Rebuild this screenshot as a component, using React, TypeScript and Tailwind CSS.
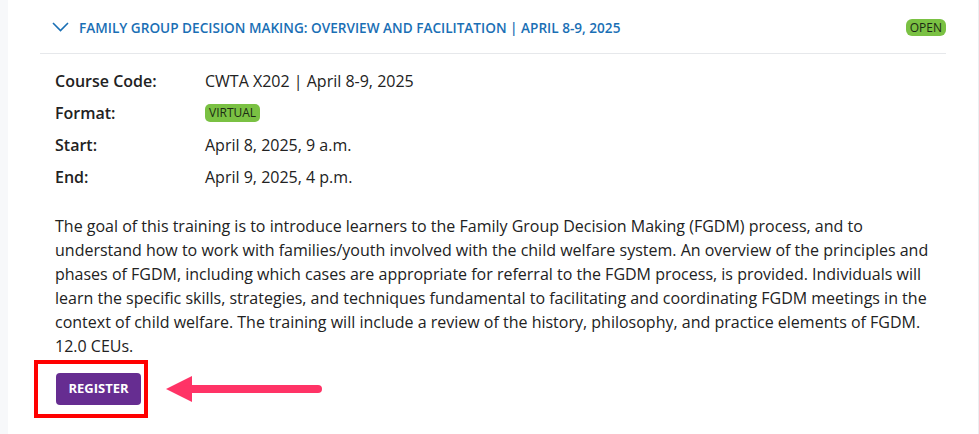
const details = [
  { label: "Course Code:", value: "CWTA X202 | April 8-9, 2025" },
  { label: "Format:", badge: "VIRTUAL" },
  { label: "Start:", value: "April 8, 2025, 9 a.m." },
  { label: "End:", value: "April 9, 2025, 4 p.m." },
];

export default function App() {
  return (
    <div className="flex h-[434px] w-[979px] bg-[#f7f8fa] font-['Open_Sans',sans-serif] text-[#222]">
      <div className="ml-[8px] flex-1 border-r border-[#eceef1] bg-white">
        <div className="ml-[32px] mr-[32px] flex h-[54px] items-center border-b border-[#e6e8eb] pl-[12px] pt-[4px]">
          <svg width="17" height="10" viewBox="0 0 17 10" className="mt-[-4px] shrink-0">
            <path d="M1 1 L8.5 8.5 L16 1" fill="none" stroke="#1a6fb5" strokeWidth="1.6" />
          </svg>
          <h2 className="ml-[10px] flex-1 text-[13.6px] font-semibold text-[#1a6fb5]">
            FAMILY GROUP DECISION MAKING: OVERVIEW AND FACILITATION | APRIL 8-9, 2025
          </h2>
          <span className="mt-[-2px] rounded-[6px] bg-[#7ac143] px-[4px] py-[1px] text-[12px] leading-[15px] text-[#1c2a14]">OPEN</span>
        </div>

        <div className="pl-[47px] pt-[11px]">
          {details.map((row) => (
            <div key={row.label} className="flex h-[32px] items-center text-[16px]">
              <span className="w-[150px] font-semibold">{row.label}</span>
              {row.badge ? (
                <span className="rounded-[5px] bg-[#7ac143] px-[4px] py-[1px] text-[12px] leading-[16px] text-[#1c2a14]">{row.badge}</span>
              ) : (
                <span>{row.value}</span>
              )}
            </div>
          ))}

          <p className="mt-[21px] w-[880px] text-[16px] leading-[24px]">
            The goal of this training is to introduce learners to the Family Group Decision Making (FGDM) process, and to
            understand how to work with families/youth involved with the child welfare system. An overview of the principles
            and phases of FGDM, including which cases are appropriate for referral to the FGDM process, is provided.
            Individuals will learn the specific skills, strategies, and techniques fundamental to facilitating and coordinating
            FGDM meetings in the context of child welfare. The training will include a review of the history, philosophy, and
            practice elements of FGDM. 12.0 CEUs.
          </p>

          <div className="mt-[2px] flex items-center">
            <div className="ml-[-21px] border-[4px] border-[#ff0000] pb-[9px] pl-[18px] pr-[3px] pt-[9px]">
              <button className="h-[32px] w-[85px] rounded-[4px] bg-[#662d91] text-[13px] font-bold text-white">REGISTER</button>
            </div>
            <svg width="160" height="28" viewBox="0 0 160 28" className="ml-[18px]">
              <path d="M0 14 L26 1 L26 27 Z" fill="#ff3366" />
              <line x1="22" y1="14" x2="152" y2="14" stroke="#ff3366" strokeWidth="8" strokeLinecap="round" />
            </svg>
          </div>
        </div>
      </div>
    </div>
  );
}
